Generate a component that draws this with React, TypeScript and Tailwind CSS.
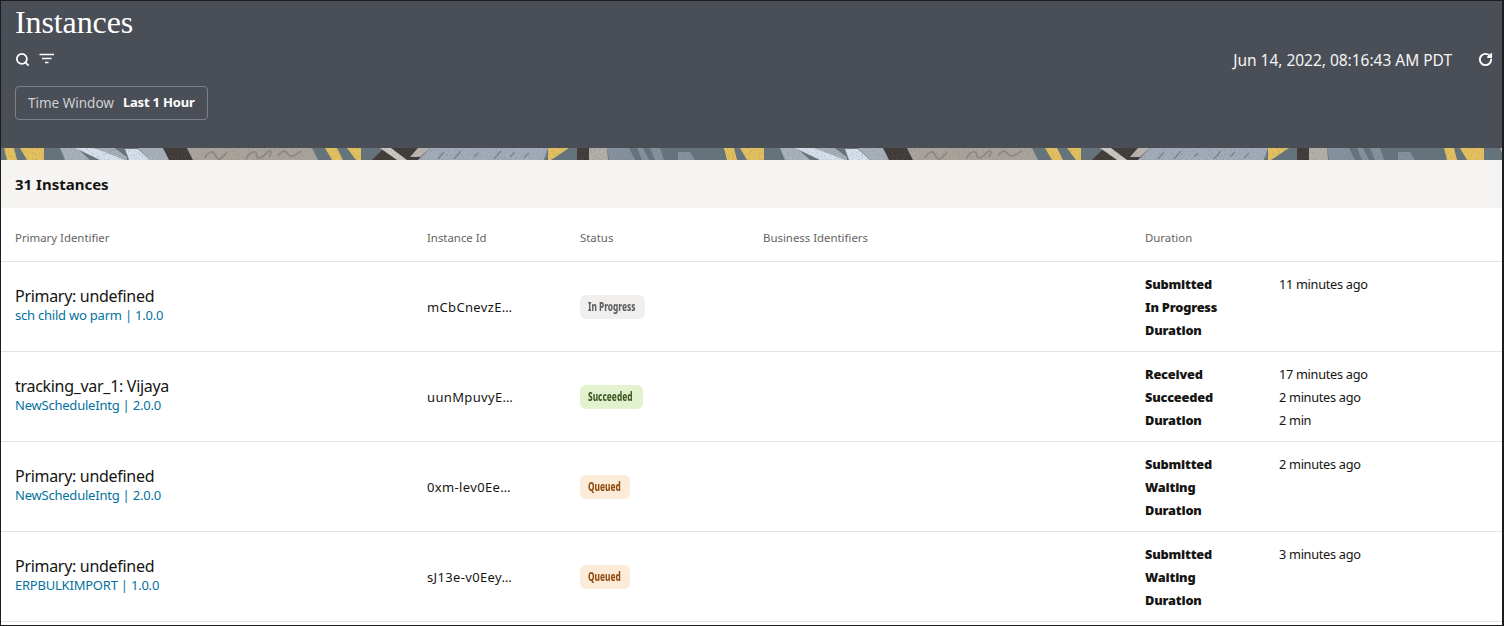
import { RotateCw, Search } from 'lucide-react'

const instances = [
  {
    primary: 'Primary: undefined',
    integration: 'sch child wo parm | 1.0.0',
    id: 'mCbCnevzE…',
    status: 'In Progress',
    badge: 'w-[65px] bg-[#f1efed] text-[#5f5f5f]',
    times: [
      ['Submitted', '11 minutes ago'],
      ['In Progress', ''],
      ['Duration', ''],
    ],
  },
  {
    primary: 'tracking_var_1: Vijaya',
    integration: 'NewScheduleIntg | 2.0.0',
    id: 'uunMpuvyE…',
    status: 'Succeeded',
    badge: 'w-[63px] bg-[#e2f2cf] text-[#3f5a25]',
    times: [
      ['Received', '17 minutes ago'],
      ['Succeeded', '2 minutes ago'],
      ['Duration', '2 min'],
    ],
  },
  {
    primary: 'Primary: undefined',
    integration: 'NewScheduleIntg | 2.0.0',
    id: '0xm-lev0Ee…',
    status: 'Queued',
    badge: 'w-[50px] bg-[#fcebd9] text-[#8f4f14]',
    times: [
      ['Submitted', '2 minutes ago'],
      ['Waiting', ''],
      ['Duration', ''],
    ],
  },
  {
    primary: 'Primary: undefined',
    integration: 'ERPBULKIMPORT | 1.0.0',
    id: 'sJ13e-v0Eey…',
    status: 'Queued',
    badge: 'w-[50px] bg-[#fcebd9] text-[#8f4f14]',
    times: [
      ['Submitted', '3 minutes ago'],
      ['Waiting', ''],
      ['Duration', ''],
    ],
  },
]

const columns = 'grid grid-cols-[412px_153px_183px_382px_1fr] pl-[14px]'

function FilterIcon() {
  return (
    <svg width="16" height="12" viewBox="0 0 16 12" fill="none" stroke="#fff" strokeWidth="1.6">
      <path d="M0.5 1.5h14.5M3 5.5h9.5M6 9.5h3.5" />
    </svg>
  )
}

function Banner() {
  return (
    <svg className="block h-[12px] w-full shrink-0" preserveAspectRatio="none">
      <defs>
        <filter id="speckle" x="0" y="0" width="100%" height="100%">
          <feTurbulence type="fractalNoise" baseFrequency="0.8" numOctaves="2" seed="4" />
          <feColorMatrix values="0 0 0 0 0.15  0 0 0 0 0.15  0 0 0 0 0.15  1.6 0 0 0 -0.72" />
        </filter>
        <pattern id="tile" x="-1" width="720" height="12" patternUnits="userSpaceOnUse">
          <rect width="720" height="12" fill="#65747c" />
          <path d="M4 0h10l3 12H7zM20 0h24v12H27z" fill="#e6c35f" />
          <path d="M60 0h17l13 12H65z" fill="#aab3bc" />
          <path d="M75 0h20l31 12H100z" fill="#d9e2ee" />
          <path d="M94 0h21l12 9v3h-1z" fill="#a7b0b9" />
          <path d="M115 0h12v9z" fill="#65747c" />
          <path d="M125 1h13l12 11h-21z" fill="#d9e2ee" />
          <path d="M138 0h25l7 12h-20z" fill="#a9b2bb" />
          <path d="M163 0h24l6 12h-24z" fill="#3f3a38" />
          <path d="M187 0h125l6 12H193z" fill="#aba59d" />
          <path
            d="M205 10c3-6 7-7 9-5s2 6 5 6 5-3 8-7M246 11c2-5 6-8 9-7s0 6 4 6 7-6 10-7 2 4 0 6M278 8c3-5 6-6 8-4s3 5 7 4 6-4 9-5"
            fill="none"
            stroke="#8f8a84"
            strokeWidth="1.8"
          />
          <path d="M325 0h12l6 12h-11zM347 0h14v12h-5z" fill="#e6c35f" />
          <path d="M372 12L384 0h46l-12 12z" fill="#3f3a38" />
          <path d="M380 0h11l16 12h-10z" fill="#cfcac3" />
          <path d="M418 0h12l-10 9h-10z" fill="#bdb8b0" />
          <path d="M430 0h118l-4 12H418z" fill="#a3adbb" />
          <path
            d="M438 11l6-7M454 11l7-8M474 9l4-4M494 11l7-8M510 9l5-5M524 10l5-5M544 11l3-4"
            fill="none"
            stroke="#78828e"
            strokeWidth="1.2"
          />
          <path d="M548 0h21l-15 10-3 2h-3z" fill="#e6c35f" />
          <path d="M577 0h12v12h-12z" fill="#3f3a38" />
          <path d="M589 0h18l1 12h-19z" fill="#b4b0aa" />
          <path d="M607 0h22l6 12h-26zM637 0h6l6 12h-7zM650 0h10l4 12h-9zM678 4h12l5 8h-17z" fill="#86929f" />
        </pattern>
      </defs>
      <rect width="100%" height="12" fill="url(#tile)" />
      <rect width="100%" height="12" filter="url(#speckle)" opacity="0.55" />
    </svg>
  )
}

export default function App() {
  return (
    <div className="flex h-[626px] flex-col overflow-hidden border border-r-2 border-[#1c1c1c] bg-white font-['Noto_Sans',sans-serif] text-[#161513]">
      <header className="flex h-[147px] shrink-0 flex-col bg-[#4a4e56] pl-[14px] pr-[9px] text-white">
        <h1 className="mt-[3px] font-['Liberation_Serif',serif] text-[32px] leading-[36px] tracking-[-0.1px]">Instances</h1>
        <div className="mt-[8px] flex h-[24px] items-center">
          <Search size={15} strokeWidth={2.8} className="mt-[-2px]" />
          <span className="ml-[9px] mt-[-2px] flex">
            <FilterIcon />
          </span>
          <span className="ml-auto text-[15.5px] leading-[22px] tracking-[-0.02px] text-[#f5f5f5]">Jun 14, 2022, 08:16:43 AM PDT</span>
          <RotateCw size={15} strokeWidth={3} className="ml-[26px] mt-[-2px]" />
        </div>
        <div className="mt-[14px] flex h-[34px] w-[193px] items-center rounded-[4px] border border-[#7d8086] pl-[12px] text-[13px]">
          <span className="text-[13.5px] text-[#d0d1d3]">Time Window</span>
          <span className="ml-[9px] font-bold tracking-[-0.2px]">Last 1 Hour</span>
        </div>
      </header>
      <Banner />
      <div className="flex h-[48px] shrink-0 items-center bg-[#f5f4f2] pl-[14px] text-[15px] font-bold">31 Instances</div>
      <div className={`${columns} h-[54px] shrink-0 items-center border-b border-[#e4e2df] pt-[6px] text-[11.4px] text-[#66645f]`}>
        <span>Primary Identifier</span>
        <span>Instance Id</span>
        <span>Status</span>
        <span>Business Identifiers</span>
        <span>Duration</span>
      </div>
      {instances.map((item) => (
        <div key={item.id} className={`${columns} h-[90px] shrink-0 items-center border-b border-[#e4e2df]`}>
          <div className="mt-[-6px]">
            <div className="text-[16px] leading-[22px] tracking-[-0.3px]">{item.primary}</div>
            <div className="text-[13px] leading-[16px] tracking-[-0.22px] text-[#04719e]">{item.integration}</div>
          </div>
          <div className="mt-[2px] text-[13px] tracking-[0.35px]">{item.id}</div>
          <div>
            <span className={`flex h-[24px] items-center rounded-[6px] pl-[8px] text-[11.5px] font-extrabold ${item.badge}`}>
              <span className="origin-left scale-x-[0.72] whitespace-nowrap">{item.status}</span>
            </span>
          </div>
          <div />
          <div className="mt-[2px] flex flex-col gap-[3px]">
            {item.times.map(([label, value]) => (
              <div key={label} className="flex h-[20px] items-center text-[12.75px] tracking-[-0.3px]">
                <span className="w-[134px] font-black tracking-[-0.2px]">{label}</span>
                <span>{value}</span>
              </div>
            ))}
          </div>
        </div>
      ))}
    </div>
  )
}
